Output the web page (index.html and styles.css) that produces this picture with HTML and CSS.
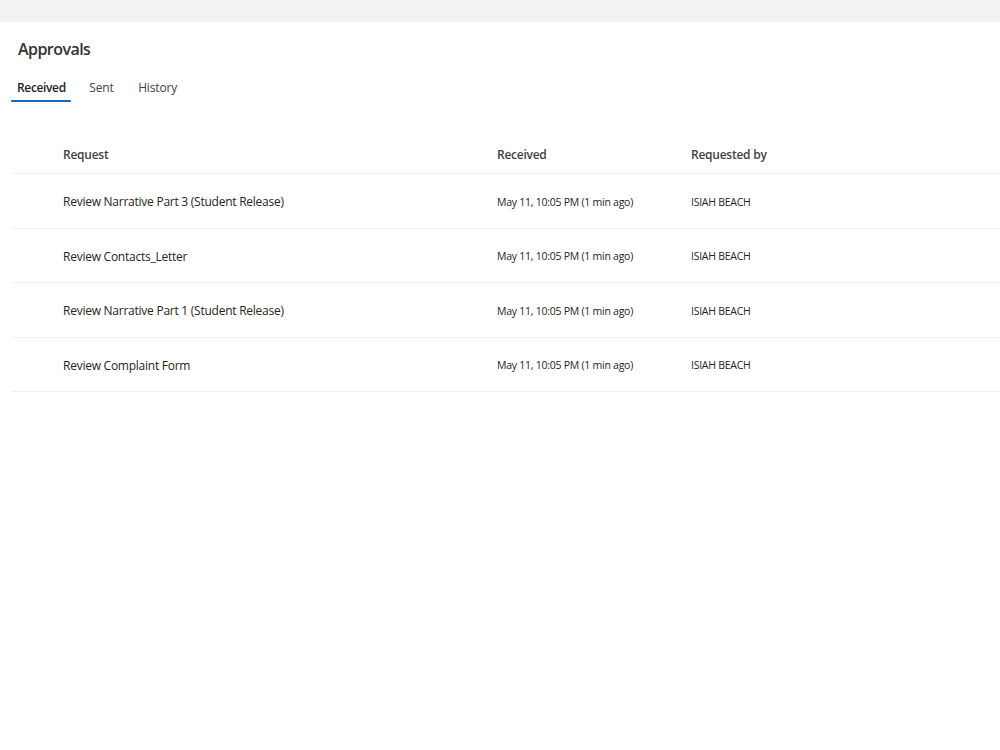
FILE: index.html
```html
<!DOCTYPE html>
<html>
<head>
<meta charset="utf-8">
<link rel="stylesheet" href="styles.css">
</head>
<body>
<div class="topbar"></div>
<main class="page">
  <h1 class="title">Approvals</h1>
  <nav class="tabs">
    <span class="tab active">Received</span>
    <span class="tab">Sent</span>
    <span class="tab">History</span>
  </nav>
  <div class="table">
    <div class="row head">
      <div class="c-req">Request</div>
      <div class="c-date">Received</div>
      <div class="c-by">Requested by</div>
    </div>
    <div class="row">
      <div class="c-req">Review Narrative Part 3 (Student Release)</div>
      <div class="c-date">May 11, 10:05 PM (1 min ago)</div>
      <div class="c-by">ISIAH BEACH</div>
    </div>
    <div class="row">
      <div class="c-req">Review Contacts_Letter</div>
      <div class="c-date">May 11, 10:05 PM (1 min ago)</div>
      <div class="c-by">ISIAH BEACH</div>
    </div>
    <div class="row">
      <div class="c-req">Review Narrative Part 1 (Student Release)</div>
      <div class="c-date">May 11, 10:05 PM (1 min ago)</div>
      <div class="c-by">ISIAH BEACH</div>
    </div>
    <div class="row">
      <div class="c-req">Review Complaint Form</div>
      <div class="c-date">May 11, 10:05 PM (1 min ago)</div>
      <div class="c-by">ISIAH BEACH</div>
    </div>
  </div>
</main>
</body>
</html>
```
FILE: styles.css
```css
* { box-sizing: border-box; }
html, body { margin: 0; padding: 0; background: #fff; }
body {
  font-family: "Open Sans", "Noto Sans", sans-serif;
  color: #242424;
  width: 1000px;
  height: 750px;
  overflow: hidden;
}
.topbar { height: 22px; background: #f3f3f3; }
.page { padding: 0 0 0 11px; }
.title {
  margin: 0;
  padding: 16px 0 0 7px;
  font-size: 16px;
  font-weight: 600;
  line-height: 22px;
  color: #333;
  letter-spacing: -0.55px;
}
.tabs {
  display: flex;
  gap: 12.5px;
  margin-top: 20px;
  height: 26px;
}
.tab {
  font-size: 12px;
  line-height: 16px;
  color: #424242;
  padding: 0 6px 0 6px;
  position: relative;
  letter-spacing: -0.15px;
}
.tab.active {
  font-weight: 600;
  color: #242424;
  padding: 0 5px 0 6px;
  letter-spacing: -0.35px;
}
.tab.active::after {
  content: "";
  position: absolute;
  left: 0;
  right: 0;
  top: 20px;
  height: 2px;
  background: #0f6cbd;
  border-radius: 1px;
}
.table { margin-top: 34px; }
.row {
  display: flex;
  align-items: center;
  height: 54.5px;
  padding-top: 2px;
  border-bottom: 1px solid #f0f0f0;
  font-size: 12px;
  letter-spacing: -0.25px;
}
.row.head {
  height: 34px;
  align-items: flex-start;
  padding-top: 6px;
  font-weight: 600;
  color: #424242;
}
.c-req { width: 486px; padding-left: 52px; }
.c-date { width: 194px; font-size: 10.5px; }
.c-by { font-size: 10.5px; }
.head .c-date, .head .c-by { font-size: 12px; }
```
